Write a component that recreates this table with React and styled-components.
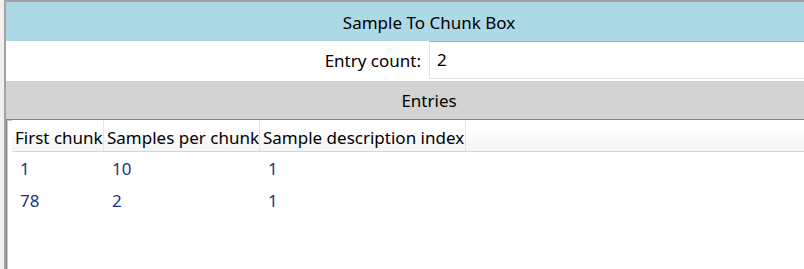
import React from 'react';
import styled, { createGlobalStyle } from 'styled-components';

const GlobalStyle = createGlobalStyle`
    html, body {
        margin: 0;
        padding: 0;
        background: #f0f0f0;
        overflow: hidden;
    }
    body {
        font-family: "Noto Sans", "Open Sans", sans-serif;
        font-size: 17px;
        color: #000;
    }
`;

// The panel is wider than the host frame and gets cut off on the right.
const Viewport = styled.div`
    width: 100vw;
    height: 100vh;
    overflow: hidden;
`;

const Window = styled.div`
    margin-left: 4px;
    width: 846px;
    height: 269px;
    border-left: 2px solid #a3a3a3;
    border-top: 2px solid #a3a3a3;
    background: #fff;
    display: flex;
    flex-direction: column;
`;

const TitleBar = styled.div`
    height: 39px;
    box-sizing: border-box;
    padding-top: 9px;
    line-height: 23px;
    text-align: center;
    background: #add8e6;
`;

const FieldRow = styled.div`
    height: 39px;
    display: grid;
    grid-template-columns: 1fr 1fr;
    background: #fff;
`;

const FieldLabel = styled.div`
    box-sizing: border-box;
    padding: 8px 8px 0 0;
    line-height: 23px;
    text-align: right;
`;

const FieldValue = styled.div`
    box-sizing: border-box;
    height: 38px;
    padding: 6px 0 0 7px;
    line-height: 23px;
    border: 1px solid #e2e3ea;
    border-top-color: #abadb3;
    border-right: none;
`;

const SectionBar = styled.div`
    height: 38px;
    box-sizing: border-box;
    margin-top: 1px;
    padding-top: 8px;
    line-height: 23px;
    text-align: center;
    background: #d3d3d3;
`;

const Grid = styled.div`
    flex: 1;
    border-top: 1px solid #7d838b;
    border-left: 1px solid #7d838b;
    box-shadow: inset 1px 1px 0 #c9ccd0;
    background: #fff;
`;

const HeaderRow = styled.div`
    display: flex;
    height: 32px;
    padding-left: 5px;
`;

const HeaderCell = styled.div`
    box-sizing: border-box;
    width: ${(p) => p.$width}px;
    flex: ${(p) => (p.$fill ? 1 : 'none')};
    height: 32px;
    padding: 6px 0 0 3px;
    line-height: 23px;
    white-space: nowrap;
    background: linear-gradient(#ffffff 0%, #ffffff 40%, #f7f8f9 65%, #f4f5f6 100%);
    border-right: ${(p) => (p.$fill ? 'none' : '1px solid #e3e4e6')};
    border-bottom: 1px solid #d5d7da;
`;

const DataRow = styled.div`
    display: flex;
    height: 32px;
    align-items: center;
    padding-left: 5px;
`;

const DataCell = styled.div`
    box-sizing: border-box;
    width: ${(p) => p.$width}px;
    padding-left: 8px;
    line-height: 23px;
    color: #1b3480;
`;

const columns = [
    { key: 'firstChunk', title: 'First chunk', width: 92 },
    { key: 'samplesPerChunk', title: 'Samples per chunk', width: 156 },
    { key: 'descriptionIndex', title: 'Sample description index', width: 206 },
];

const entries = [
    { firstChunk: 1, samplesPerChunk: 10, descriptionIndex: 1 },
    { firstChunk: 78, samplesPerChunk: 2, descriptionIndex: 1 },
];

export default function App() {
    return (
        <Viewport>
            <GlobalStyle />
            <Window>
                <TitleBar>Sample To Chunk Box</TitleBar>
                <FieldRow>
                    <FieldLabel>Entry count:</FieldLabel>
                    <FieldValue>{entries.length}</FieldValue>
                </FieldRow>
                <SectionBar>Entries</SectionBar>
                <Grid>
                    <HeaderRow>
                        {columns.map((c) => (
                            <HeaderCell key={c.key} $width={c.width}>
                                {c.title}
                            </HeaderCell>
                        ))}
                        <HeaderCell $fill />
                    </HeaderRow>
                    {entries.map((row, i) => (
                        <DataRow key={i}>
                            {columns.map((c) => (
                                <DataCell key={c.key} $width={c.width}>
                                    {row[c.key]}
                                </DataCell>
                            ))}
                        </DataRow>
                    ))}
                </Grid>
            </Window>
        </Viewport>
    );
}
